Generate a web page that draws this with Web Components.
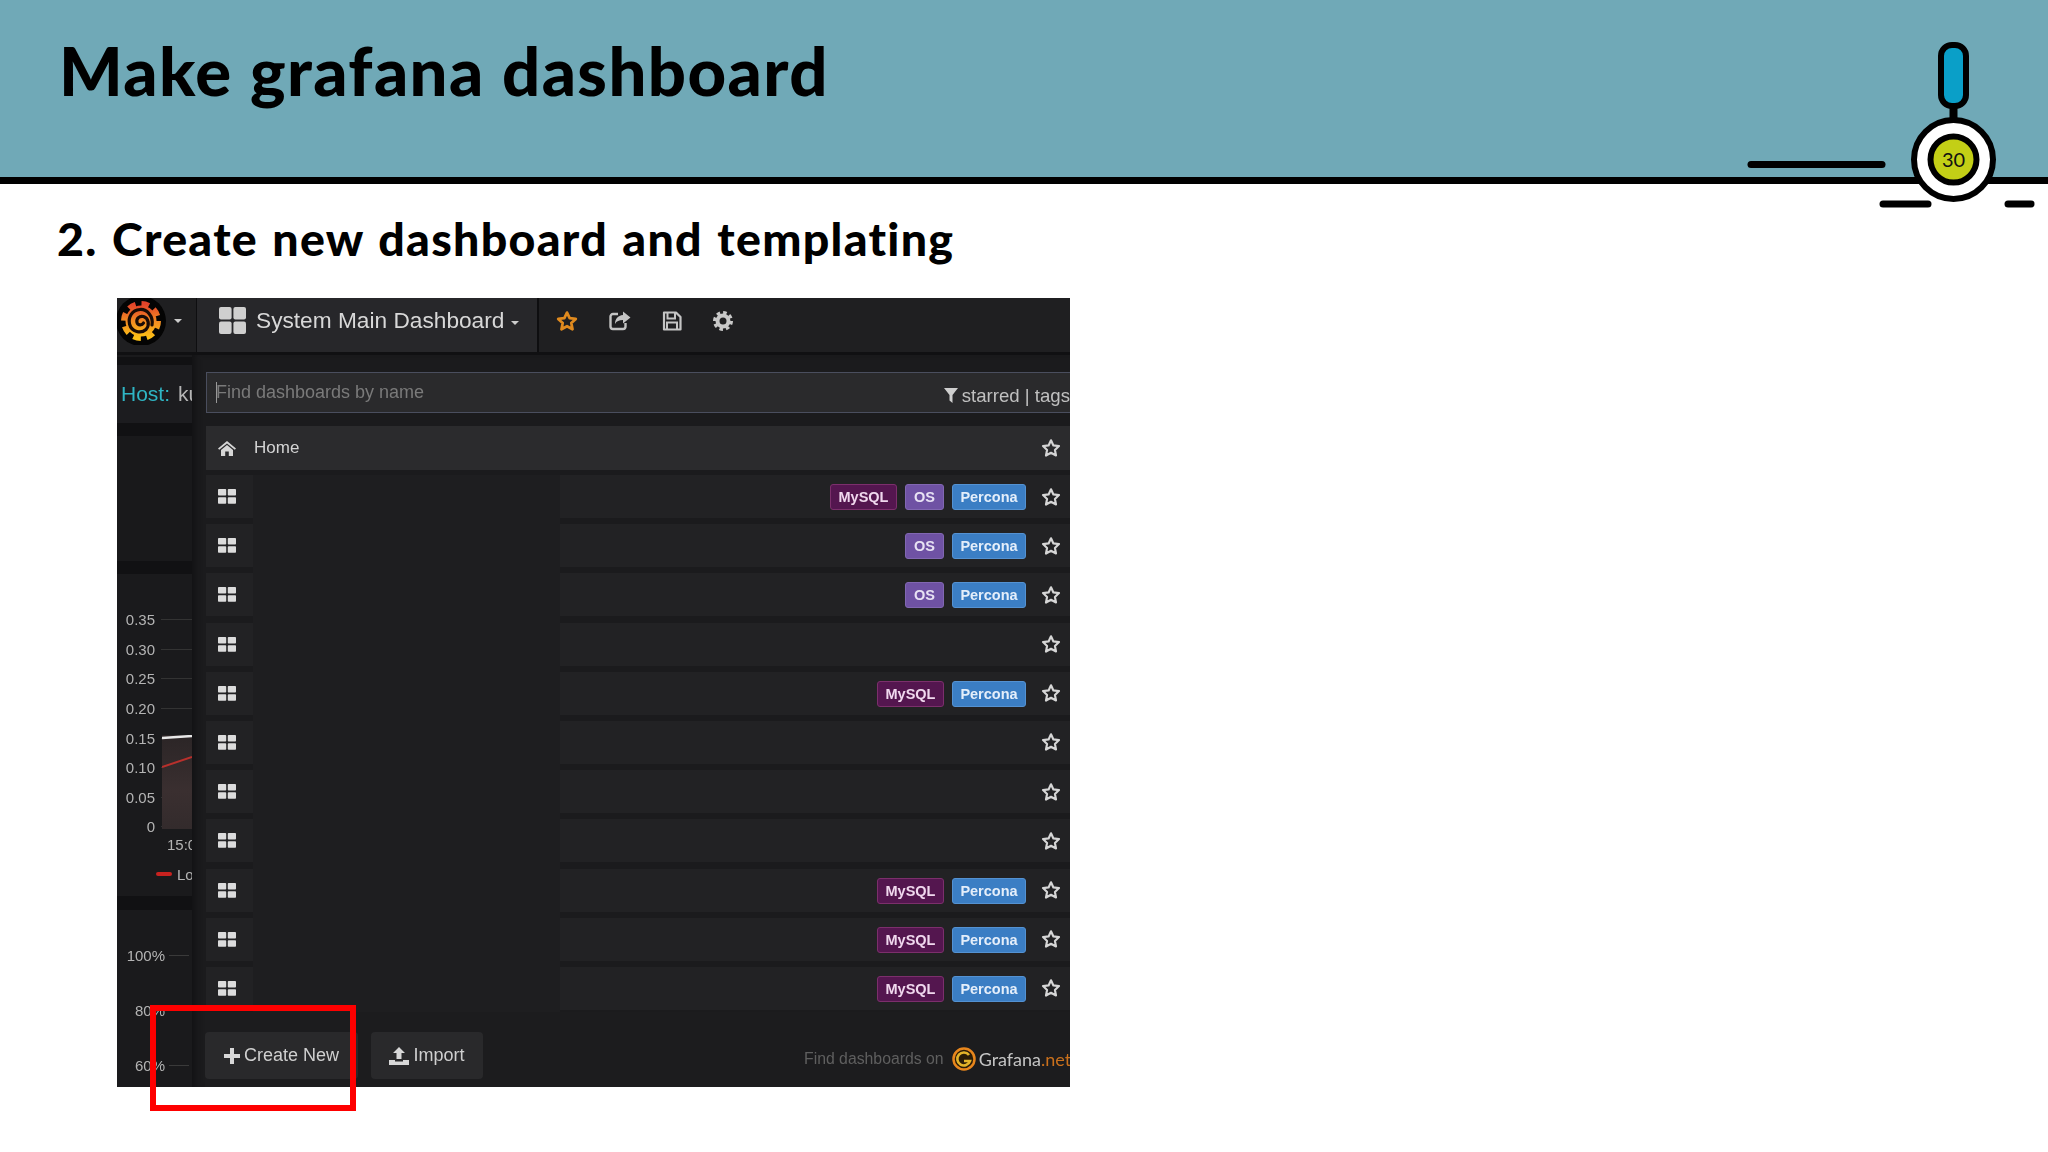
<!DOCTYPE html>
<html>
<head>
<meta charset="utf-8">
<style>
  html, body { margin: 0; padding: 0; background: #fff; }
  body { width: 2048px; height: 1152px; overflow: hidden; font-family: "Lato", "Liberation Sans", sans-serif; }
</style>
</head>
<body>
<slide-page>
  <slide-header title="Make grafana dashboard" page="30"></slide-header>
  <slide-sub>2. Create new dashboard and templating</slide-sub>
  <grafana-shot></grafana-shot>
</slide-page>

<script>
const STAR = `<svg width="20" height="20" viewBox="0 0 24 24"><polygon points="12,2.8 14.9,8.9 21.6,9.7 16.7,14.3 18,21 12,17.7 6,21 7.3,14.3 2.4,9.7 9.1,8.9" fill="none" stroke="currentColor" stroke-width="2.6" stroke-linejoin="round"/></svg>`;
const GRID = `<svg width="18" height="15" viewBox="0 0 18 15"><g fill="#dcdcdc"><rect width="8.2" height="6.6" rx=".8"/><rect x="9.8" width="8.2" height="6.6" rx=".8"/><rect y="8.2" width="8.2" height="6.6" rx=".8"/><rect x="9.8" y="8.2" width="8.2" height="6.6" rx=".8"/></g></svg>`;

class SlidePage extends HTMLElement {
  constructor() {
    super();
    this.attachShadow({mode: "open"}).innerHTML = `
      <style>
        :host { display: flex; flex-direction: column; position: relative; width: 2048px; height: 1152px; }
      </style>
      <slot></slot>`;
  }
}

class SlideHeader extends HTMLElement {
  constructor() {
    super();
    this.attachShadow({mode: "open"});
  }
  connectedCallback() {
    this.shadowRoot.innerHTML = `
      <style>
        :host { display: flex; align-items: flex-start; height: 177px; background: #70a9b7; border-bottom: 7px solid #000; padding-left: 59px; }
        h1 { margin: 37px 0 0; font: 900 67px/1 "Lato", "Open Sans", sans-serif; font-variant-ligatures: none; letter-spacing: 1.4px; color: #000; }
        svg { position: absolute; left: 1740px; top: 36px; }
        text { font: 20px "Lato", sans-serif; }
      </style>
      <h1>${this.getAttribute("title")}</h1>
      <svg width="300" height="180" viewBox="1740 36 300 180">
        <g stroke="#000" stroke-linecap="round" fill="none">
          <line x1="1751" y1="164.5" x2="1882" y2="164.5" stroke-width="7"/>
          <line x1="1883" y1="204" x2="1928" y2="204" stroke-width="7"/>
          <line x1="2008" y1="204" x2="2031" y2="204" stroke-width="7"/>
        </g>
        <line x1="1953.5" y1="105" x2="1953.5" y2="122" stroke="#000" stroke-width="8"/>
        <rect x="1941" y="45" width="25" height="61" rx="11" fill="#0a9fc8" stroke="#000" stroke-width="6"/>
        <circle cx="1953.5" cy="159.5" r="39.5" fill="#fff" stroke="#000" stroke-width="6"/>
        <circle cx="1953.5" cy="159.5" r="23" fill="#c3cf16" stroke="#000" stroke-width="6"/>
        <text x="1953.5" y="167" text-anchor="middle" fill="#111">${this.getAttribute("page")}</text>
      </svg>`;
  }
}

class SlideSub extends HTMLElement {
  constructor() {
    super();
    this.attachShadow({mode: "open"}).innerHTML = `
      <style>
        :host { display: block; height: 114px; padding: 26px 0 0 57px; box-sizing: border-box; font: 900 46.5px/56px "Lato", "Open Sans", sans-serif; font-variant-ligatures: none; letter-spacing: 1.3px; word-spacing: 2px; color: #000; }
      </style>
      <slot></slot>`;
  }
}

class DashTag extends HTMLElement {
  constructor() {
    super();
    this.attachShadow({mode: "open"}).innerHTML = `
      <style>
        :host { display: flex; align-items: center; justify-content: center; height: 26px; margin-top: 1px; box-sizing: border-box; border-radius: 3px; border: 1px solid; font: 700 14.5px "Liberation Sans", sans-serif; }
        :host([kind="MySQL"]) { width: 67px; background: #54164f; border-color: #7c2f6c; color: #f0d8ee; }
        :host([kind="OS"]) { width: 39px; background: #6f52a4; border-color: #8167b2; color: #e8e2f4; }
        :host([kind="Percona"]) { width: 74px; background: #3b7ec4; border-color: #5492d2; color: #e4eefa; }
      </style>
      <slot></slot>`;
  }
}

class DashRow extends HTMLElement {
  constructor() {
    super();
    this.attachShadow({mode: "open"});
  }
  connectedCallback() {
    const tags = (this.getAttribute("tags") || "").split(",").filter(Boolean)
      .map(t => `<dash-tag kind="${t}">${t}</dash-tag>`).join("");
    this.shadowRoot.innerHTML = `
      <style>
        :host { display: grid; grid-template-columns: 47px 307px 1fr; height: 43px; margin-bottom: 6.2px; flex: none; }
        .icon { display: flex; align-items: center; justify-content: center; padding-right: 5px; background: #222224; }
        .blank { background: #1e1e20; margin-bottom: -6.2px; }
        .right { display: flex; align-items: center; justify-content: flex-end; gap: 8px; padding-right: 9px; background: #222224; color: #d6d6d6; }
        .star { margin-left: 7px; display: flex; }
      </style>
      <div class="icon">${GRID}</div>
      <div class="blank"></div>
      <div class="right">${tags}<span class="star">${STAR}</span></div>`;
  }
}

class SideGraph extends HTMLElement {
  constructor() {
    super();
    this.attachShadow({mode: "open"}).innerHTML = `
      <style>
        :host { display: flex; flex-direction: column; width: 75px; flex: none; background: #1a1a1c; color: #b4b4b4; font: 15px "Liberation Sans", sans-serif; overflow: hidden; }
        .band { background: #111113; flex: none; }
        .host { height: 58px; flex: none; display: flex; align-items: center; padding-left: 4px; gap: 8px; background: #1c1c1f; font-size: 21px; white-space: nowrap; }
        .host b { font-weight: 400; color: #2fb5c4; }
        .graph { margin-top: 31px; flex: none; position: relative; }
        .tick { height: 29.6px; display: flex; align-items: center; }
        .tick span { width: 38px; text-align: right; flex: none; }
        .tick u { margin-left: 6px; flex: 1; height: 1px; background: #333; }
        .plot { position: absolute; left: 45px; top: 130px; width: 30px; height: 94px; background: linear-gradient(#2b2526, #3a2f30 60%, #332b2c); }
        .plot svg { display: block; }
        .time { padding-left: 50px; height: 16px; line-height: 16px; margin-top: -5px; white-space: nowrap; }
        .legend { display: flex; align-items: center; gap: 5px; padding-left: 39px; height: 18px; margin-top: 13px; white-space: nowrap; }
        .legend i { width: 16px; height: 4px; border-radius: 2px; background: #c8221f; flex: none; }
        .pct { display: flex; justify-content: flex-end; flex: none; height: 55px; align-items: center; gap: 4px; padding-right: 3px; }
        .pct u { width: 20px; height: 1px; background: #3a3a3a; }
      </style>
      <div class="band" style="height:8px;margin-top:2px"></div>
      <div class="host"><b>Host:</b><span>ku</span></div>
      <div class="band" style="height:13px"></div>
      <div style="height:125px;flex:none;background:#19191b"></div>
      <div class="band" style="height:13px"></div>
      <div class="graph">
        <div class="tick"><span>0.35</span><u></u></div>
        <div class="tick"><span>0.30</span><u></u></div>
        <div class="tick"><span>0.25</span><u></u></div>
        <div class="tick"><span>0.20</span><u></u></div>
        <div class="tick"><span>0.15</span><u></u></div>
        <div class="tick"><span>0.10</span><u></u></div>
        <div class="tick"><span>0.05</span><u></u></div>
        <div class="tick"><span>0</span><u></u></div>
        <div class="plot"><svg width="30" height="94"><line x1="0" y1="32" x2="30" y2="22" stroke="#b8302c" stroke-width="2"/><line x1="0" y1="3" x2="30" y2="1" stroke="#e8e8e8" stroke-width="2.5"/></svg></div>
      </div>
      <div class="time">15:00</div>
      <div class="legend"><i></i><span>Load</span></div>
      <div class="band" style="height:14px;margin-top:13px"></div>
      <div style="height:18px;flex:none"></div>
      <div class="pct"><span>100%</span><u></u></div>
      <div class="pct"><span>80%</span><u></u></div>
      <div class="pct"><span>60%</span><u></u></div>
    `;
  }
}

class GrafanaShot extends HTMLElement {
  constructor() {
    super();
    this.attachShadow({mode: "open"}).innerHTML = `
      <style>
        :host { display: block; position: relative; width: 953px; height: 789px; margin-left: 117px; background: #161618; font-family: "Liberation Sans", sans-serif; }
        .wrap { width: 100%; height: 100%; overflow: hidden; display: flex; flex-direction: column; filter: blur(.6px); }
        .top { height: 54px; flex: none; display: flex; align-items: stretch; background: #1f1f21; border-bottom: 3px solid #101012; color: #cfcfcf; }
        .logo { width: 80px; flex: none; display: flex; align-items: center; gap: 8px; padding-bottom: 9px; border-right: 1px solid #0e0e10; box-sizing: border-box; }
        .caret { width: 0; height: 0; border: 4.5px solid transparent; border-top-color: #ccc; border-bottom: 0; }
        .nav { width: 342px; flex: none; display: flex; align-items: center; padding: 0 0 9px 22px; gap: 10px; box-sizing: border-box; background: #27272a; border-right: 2px solid #0e0e10; font-size: 22.7px; color: #d8d8d8; white-space: nowrap; }
        .nav .caret { margin: 4px 0 0 -3px; }
        .tools { display: flex; align-items: center; gap: 31px; padding: 0 0 9px 17px; }
        .tools svg { display: block; }
        .body { flex: 1; display: flex; min-height: 0; }
        .panel { flex: 1; min-width: 0; background: #1b1b1d; display: flex; flex-direction: column; padding-left: 14px; box-shadow: inset 6px 0 6px -3px #121214; }
        .search { margin-top: 17px; height: 41px; flex: none; display: flex; align-items: center; justify-content: space-between; background: #2a2a2c; border: 1px solid #4a4e5e; border-right: 0; box-sizing: border-box; font-size: 18px; color: #7a7a7a; }
        .search span:first-child { padding-left: 9px; position: relative; margin-top: -1px; }
        .search span:first-child::before { content: ""; position: absolute; left: 9px; top: 0; bottom: 0; width: 1px; background: #999; }
        .filter { display: flex; align-items: center; gap: 4px; color: #c0c0c0; margin-top: 6px; white-space: nowrap; font-size: 18.6px; }
        .home { margin-top: 13px; margin-bottom: 5px; height: 44px; flex: none; display: flex; align-items: center; background: #2b2b2d; color: #d4d4d4; font-size: 17px; padding: 0 9px 0 12px; }
        .home .name { margin-left: 18px; flex: 1; }
        .home .star { display: flex; }
        .rows { flex: 1; min-height: 0; overflow: hidden; display: flex; flex-direction: column; }
        .foot { height: 75px; flex: none; display: flex; align-items: flex-start; background: #1c1c1e; padding-top: 20px; margin-left: -1px; box-sizing: border-box; }
        .btn { height: 47px; flex: none; display: flex; align-items: center; justify-content: center; gap: 4px; box-sizing: border-box; background: #29292b; border-radius: 4px; color: #cfcfcf; font-size: 18px; white-space: nowrap; }
        .create { width: 153px; }
        .import { width: 112px; margin-left: 13px; }
        .net { margin-left: auto; display: flex; align-items: center; margin-top: 15px; font-size: 15.8px; color: #5f5f5f; white-space: nowrap; margin-right: -1px; overflow: hidden; width: 267px; flex: none; box-sizing: border-box; }
        .net svg { margin: 0 3px 0 8px; flex: none; }
        .net b { font: 400 18px "Lato", sans-serif; color: #c4c4c4; }
        .net b i { font-style: normal; color: #c9701c; }
        .mark { position: absolute; left: 33px; top: 707px; width: 206px; height: 106px; box-sizing: border-box; border: 6px solid #fe0000; pointer-events: none; }
      </style>
      <div class="wrap">
        <div class="top">
          <div class="logo">
            <svg width="50" height="48" viewBox="0 0 50 48" style="flex:none;margin-left:-1px">
              <defs><linearGradient id="gf" x1="0" y1="0" x2="0" y2="1"><stop offset="0" stop-color="#e4432a"/><stop offset=".5" stop-color="#f28a22"/><stop offset="1" stop-color="#fcc016"/></linearGradient></defs>
              <circle cx="25" cy="24" r="25" fill="#040404"/>
              <g transform="translate(0 -1)">
                <circle cx="25" cy="25" r="15.5" fill="url(#gf)"/>
                <circle cx="25" cy="25" r="17" fill="none" stroke="url(#gf)" stroke-width="6" stroke-dasharray="7.5 5.85"/>
                <path d="M36 29C37.5 20 31 13 24 13.5C16 14 12 21 13.5 28C15.5 36 25 38 30 33.5C34 29 32.5 22 27.5 20.5C23.5 19.5 20 22.5 21 26.5C22 29.5 26 29.5 27.5 27" fill="none" stroke="#1a0c06" stroke-width="3.2" stroke-linecap="round"/>
              </g>
            </svg>
            <span class="caret"></span>
          </div>
          <div class="nav">
            <svg width="27" height="27" viewBox="0 0 27 27" style="flex:none"><g fill="#cfcfcf"><rect width="12.6" height="12.6" rx="2"/><rect x="14.4" width="12.6" height="12.6" rx="2"/><rect y="14.4" width="12.6" height="12.6" rx="2"/><rect x="14.4" y="14.4" width="12.6" height="12.6" rx="2"/></g></svg>
            <span>System Main Dashboard</span>
            <span class="caret"></span>
          </div>
          <div class="tools">
            <svg width="22" height="22" viewBox="0 0 24 24" style="color:#e08a1e"><polygon points="12,2.8 14.9,8.9 21.6,9.7 16.7,14.3 18,21 12,17.7 6,21 7.3,14.3 2.4,9.7 9.1,8.9" fill="none" stroke="currentColor" stroke-width="3" stroke-linejoin="round"/></svg>
            <svg width="22" height="20" viewBox="0 0 22 20"><path d="M9 3H4a2.5 2.5 0 0 0-2.5 2.5v10A2.5 2.5 0 0 0 4 18h10a2.5 2.5 0 0 0 2.5-2.5V12" fill="none" stroke="#c4c4c4" stroke-width="2.4"/><path d="M14 0.5L21.5 6.5L14 12.5V9C10 9 7.5 10 6 13C6 8 9 4.5 14 4Z" fill="#c4c4c4"/></svg>
            <svg width="20" height="20" viewBox="0 0 20 20"><path d="M2 1.5H14L18.5 6V18.5H2Z" fill="none" stroke="#c4c4c4" stroke-width="2.2" stroke-linejoin="round"/><path d="M5.5 2V7.5H13V2M5 18V11.5H15V18" fill="none" stroke="#c4c4c4" stroke-width="2"/></svg>
            <svg width="20" height="20" viewBox="0 0 20 20"><circle cx="10" cy="10" r="5.5" fill="none" stroke="#c8c8c8" stroke-width="4"/><circle cx="10" cy="10" r="8.3" fill="none" stroke="#c8c8c8" stroke-width="3.4" stroke-dasharray="3.5 3"/></svg>
          </div>
        </div>
        <div class="body">
          <side-graph></side-graph>
          <div class="panel">
            <div class="search">
              <span>Find dashboards by name</span>
              <span class="filter"><svg width="14" height="15" viewBox="0 0 14 15"><path d="M0 0H14L8.5 7V15L5.5 12.5V7Z" fill="#cfcfcf"/></svg>starred | tags</span>
            </div>
            <div class="home">
              <svg width="18" height="15" viewBox="0 0 18 15"><path d="M9 0L18 7.5L16.8 8.8L9 2.5L1.2 8.800L0 7.5ZM3 9L9 4L15 9V15H10.8V10.5H7.2V15H3Z" fill="#d6d6d6"/></svg>
              <span class="name">Home</span>
              <span class="star">${STAR}</span>
            </div>
            <div class="rows">
              <dash-row tags="MySQL,OS,Percona"></dash-row>
              <dash-row tags="OS,Percona"></dash-row>
              <dash-row tags="OS,Percona"></dash-row>
              <dash-row></dash-row>
              <dash-row tags="MySQL,Percona"></dash-row>
              <dash-row></dash-row>
              <dash-row></dash-row>
              <dash-row></dash-row>
              <dash-row tags="MySQL,Percona"></dash-row>
              <dash-row tags="MySQL,Percona"></dash-row>
              <dash-row tags="MySQL,Percona"></dash-row>
            </div>
            <div class="foot">
              <div class="btn create"><svg width="16" height="16" viewBox="0 0 16 16"><path d="M6 0H10V6H16V10H10V16H6V10H0V6H6Z" fill="#d8d8d8"/></svg>Create New</div>
              <div class="btn import"><svg width="20" height="18" viewBox="0 0 20 18"><path d="M10 0L16 6H12.5V12H7.5V6H4ZM0 13H6V14.5H14V13H20V18H0Z" fill="#d8d8d8"/></svg>Import</div>
              <div class="net">
                <span>Find dashboards on</span>
                <svg width="24" height="24" viewBox="0 0 24 24"><circle cx="12" cy="12" r="10.5" fill="#2a1c08" stroke="#e8861c" stroke-width="2.5"/><path d="M17 8a6.5 6.5 0 1 0 1 6H12" fill="none" stroke="#e3b32a" stroke-width="2.6"/></svg>
                <b>Grafana<i>.net</i></b>
              </div>
            </div>
          </div>
        </div>
      </div>
      <div class="mark"></div>`;
  }
}

customElements.define("slide-page", SlidePage);
customElements.define("slide-header", SlideHeader);
customElements.define("slide-sub", SlideSub);
customElements.define("dash-tag", DashTag);
customElements.define("dash-row", DashRow);
customElements.define("side-graph", SideGraph);
customElements.define("grafana-shot", GrafanaShot);
</script>
</body>
</html>
